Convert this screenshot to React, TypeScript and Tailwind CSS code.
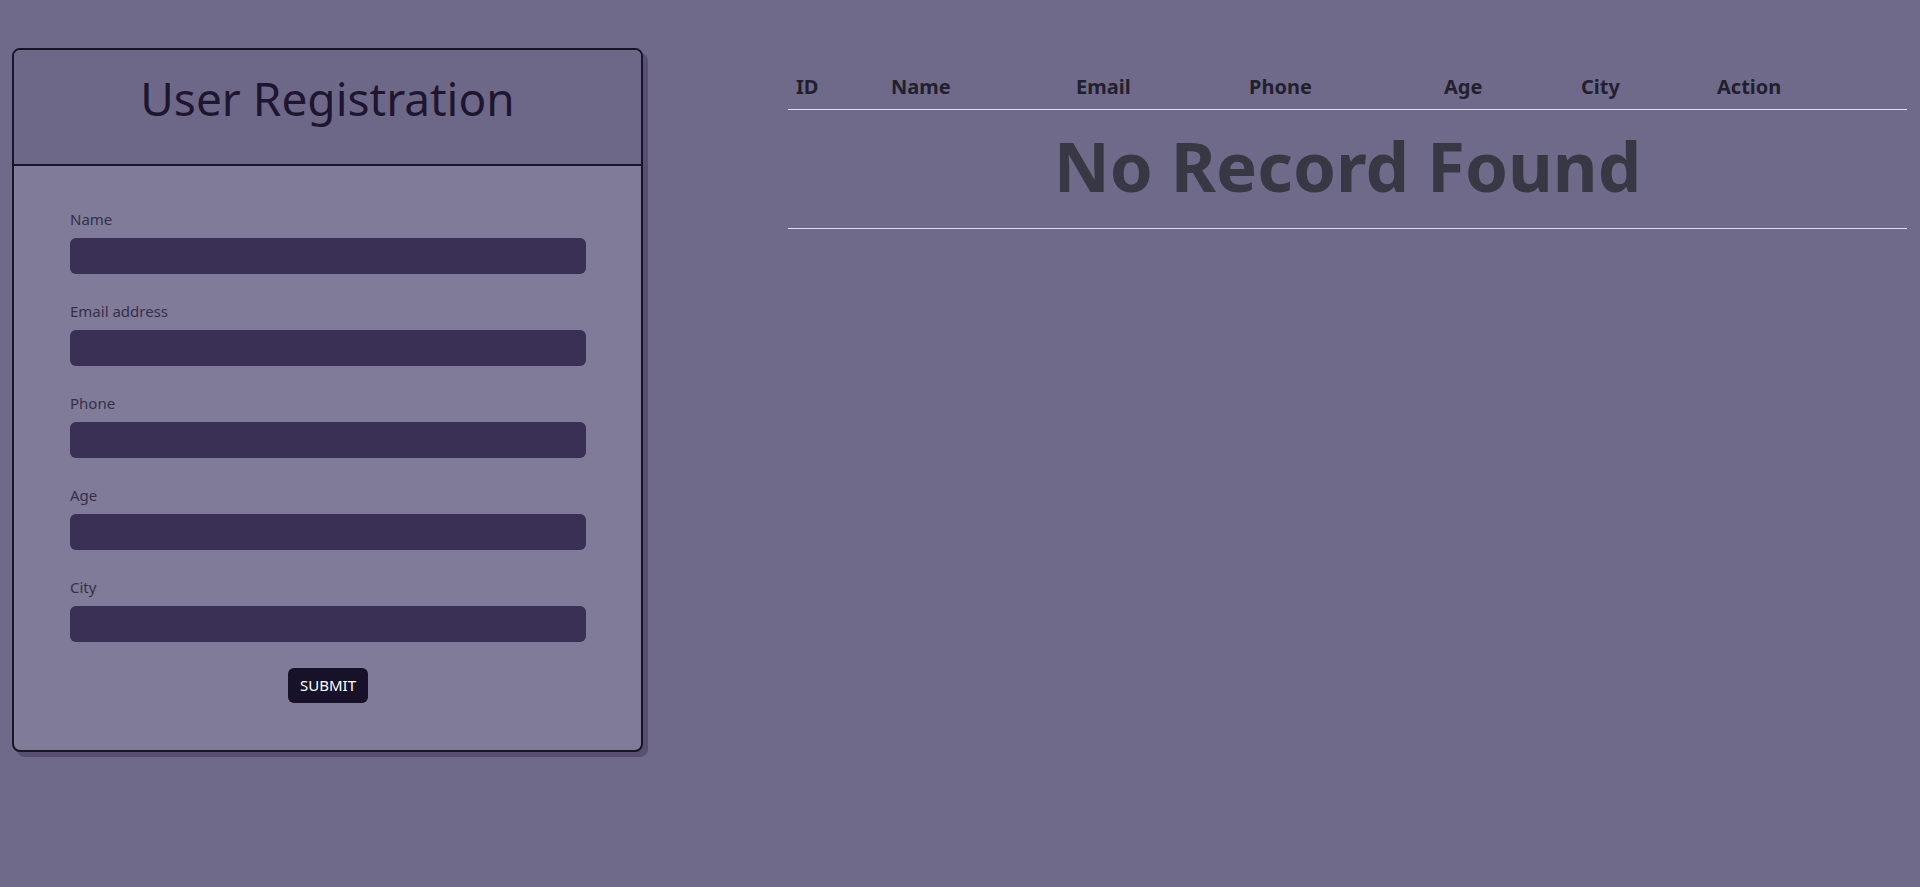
import { useState } from 'react';

type Field = {
  id: string;
  label: string;
  type: string;
};

const fields: Field[] = [
  { id: 'name', label: 'Name', type: 'text' },
  { id: 'email', label: 'Email address', type: 'email' },
  { id: 'phone', label: 'Phone', type: 'text' },
  { id: 'age', label: 'Age', type: 'number' },
  { id: 'city', label: 'City', type: 'text' },
];

const columns = ['ID', 'Name', 'Email', 'Phone', 'Age', 'City', 'Action'];
const colWidths = ['w-[95px]', 'w-[185px]', 'w-[173px]', 'w-[195px]', 'w-[137px]', 'w-[136px]', ''];

export default function App() {
  const [values, setValues] = useState<Record<string, string>>({});
  const [users] = useState<any[]>([]);

  return (
    <div
      className="min-h-[887px] w-full bg-[#6f6a8a] flex items-start"
      style={{ fontFamily: '"Noto Sans", "Open Sans", sans-serif' }}
    >
      {/* Form card */}
      <div className="ml-[12px] mt-[48px] w-[631px] shrink-0 rounded-lg border-2 border-[#1a1428] bg-[#807b98] shadow-[5px_5px_0_#58506e] overflow-hidden">
        <div className="h-[116px] flex items-center justify-center pb-[18px] bg-[#6e6888] border-b-2 border-[#1a1428]">
          <h1 className="text-[46px] text-[#1e1631] leading-none">User Registration</h1>
        </div>

        <form className="pl-[56px] pr-[55px] pt-[42px] pb-[47px]" onSubmit={(e) => e.preventDefault()}>
          {fields.map((f) => (
            <div key={f.id} className="mb-[26px]">
              <label htmlFor={f.id} className="block text-[15px] text-[#35304a] leading-[22px] mb-[8px]">
                {f.label}
              </label>
              <input
                id={f.id}
                type={f.type}
                value={values[f.id] ?? ''}
                onChange={(e) => setValues({ ...values, [f.id]: e.target.value })}
                className="block w-full h-[36px] rounded-[6px] bg-[#3a2f54] px-3 text-white outline-none"
              />
            </div>
          ))}
          <div className="flex justify-center">
            <button
              type="submit"
              className="h-[35px] px-[12px] rounded-[6px] bg-[#171129] text-white text-[15px]"
            >
              SUBMIT
            </button>
          </div>
        </form>
      </div>

      {/* Users table */}
      <div className="ml-[145px] mt-[63px] w-[1119px]">
        <table className="w-full border-collapse">
          <thead>
            <tr className="border-b border-[#e4e1ee]">
              {columns.map((c, i) => (
                <th
                  key={c}
                  className={`${colWidths[i]} text-left pl-[8px] pt-[10px] pb-[8px] text-[20px] leading-[28px] font-bold text-[#221f2e]`}
                >
                  {c}
                </th>
              ))}
            </tr>
          </thead>
          <tbody>
            {users.length === 0 && (
              <tr className="border-b border-[#e4e1ee]">
                <td colSpan={7} className="text-center pt-[21px] pb-[28px] text-[69px] leading-none font-bold text-[#383844]">
                  No Record Found
                </td>
              </tr>
            )}
          </tbody>
        </table>
      </div>
    </div>
  );
}
